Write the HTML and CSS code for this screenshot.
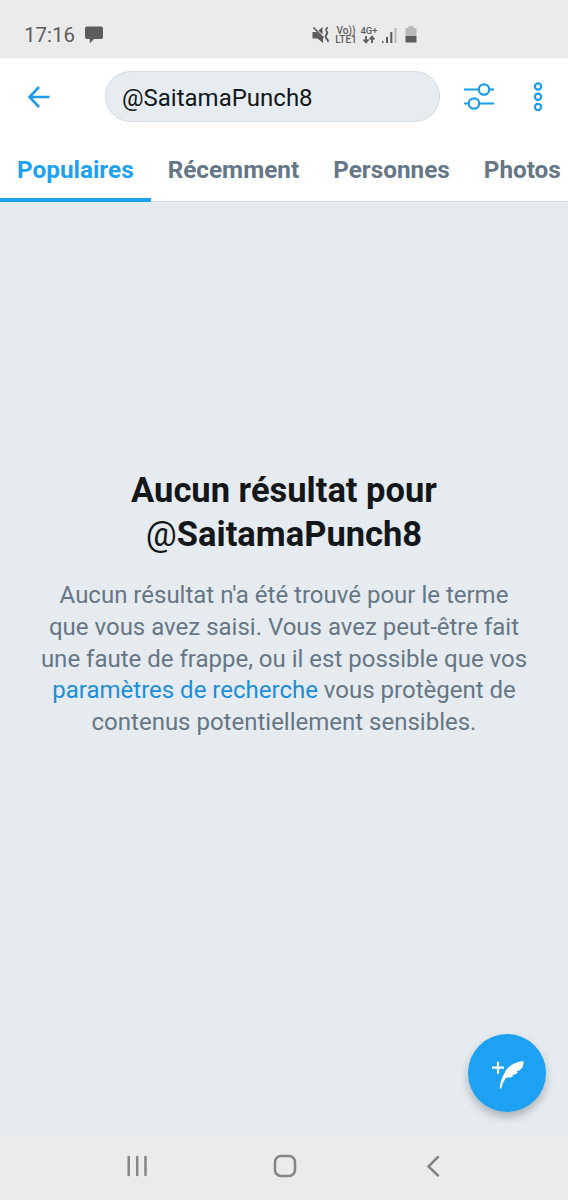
FILE: index.html
```html
<!DOCTYPE html>
<html lang="fr">
<head>
<meta charset="utf-8">
<title>Recherche</title>
<link rel="stylesheet" href="styles.css">
</head>
<body>
<div class="screen">
  <header class="status">
    <span class="clock">17:16</span>
    <svg class="chat" width="18" height="18" viewBox="0 0 18 18"><path d="M2 0.5h14q2 0 2 2v8.500q0 2-2 2h-7l-4.200 4.500V13H2q-2 0-2-2V2.500q0-2 2-2z"/></svg>
    <div class="indicators">
      <svg class="mute" width="18" height="18" viewBox="0 0 18 18"><path d="M0.500 6h4L11 12v5L5.500 12.500H.500z"/><path d="M6.500 4.500L10.500 1v7.500z"/><path class="line" d="M1.500 1.500l10 10.500M16 1.500q-3 1.500-1.500 3.500t0 3.500q-2 2 0 4t1.500 3.500"/></svg>
      <div class="stack volte"><span>Vo))</span><span>LTE1</span></div>
      <div class="stack data"><span>4G+</span><svg width="14" height="9" viewBox="0 0 14 9"><path class="line" d="M4 1v6M1.500 4.500L4 7.300 6.500 4.500M10 8V2M7.500 4.500L10 1.700 12.500 4.500"/></svg></div>
      <svg class="signal" width="15" height="17" viewBox="0 0 15 17"><path d="M0 14h1.500v2H0zM4 10h2v6H4zM8.300 5h2v11h-2z"/><path class="faint" d="M12.500 1h2v15h-2z"/></svg>
      <svg class="battery" width="12" height="18" viewBox="0 0 12 18"><path class="faint" d="M3.500 0h5v2H11.500v8H.500V2h3z"/><path d="M.500 10H11.500v6q0 .5-.5 .5h-10q-.5 0-.5-.5z"/></svg>
    </div>
  </header>
  <div class="toolbar">
    <svg class="back" width="24" height="24" viewBox="0 0 24 24"><path d="M22.500 12H3M12 2L2.500 12l9.500 10"/></svg>
    <div class="search">@SaitamaPunch8</div>
    <svg class="filters" width="30" height="28" viewBox="0 0 30 28"><path d="M0 6.500h14.500M25.500 6.500H30M0 20.500h4.500M15.500 20.500H30"/><circle cx="20" cy="6.500" r="5.200"/><circle cx="10" cy="20.500" r="5.200"/></svg>
    <svg class="more" width="10" height="30" viewBox="0 0 10 30"><circle cx="5" cy="4.500" r="3.100"/><circle cx="5" cy="14.800" r="3.100"/><circle cx="5" cy="25" r="3.100"/></svg>
  </div>
  <nav class="tabs">
    <span class="tab active">Populaires</span><span class="tab">Récemment</span><span class="tab">Personnes</span><span class="tab">Photos</span>
  </nav>
  <main class="empty">
    <h1>Aucun résultat pour<br><span class="at">@</span>SaitamaPunch8</h1>
    <p>Aucun résultat n'a été trouvé pour le terme<br>que vous avez saisi. Vous avez peut-être fait<br>une faute de frappe, ou il est possible que vos<br><a>paramètres de recherche</a> vous protègent de<br>contenus potentiellement sensibles.</p>
    <div class="compose">
      <svg width="34" height="32" viewBox="0 0 34 32"><path class="plus" d="M1 9.700h12M7 3.700v12"/><path class="feather" d="M8.800 30.500C8.700 25.500 11 19.500 13.800 14.500 17 8 24 3.800 32.300 3c.5 2.600 0 4.800-1.300 6.900-1.300 2-3.200 2.900-5.800 3.400l1.600 1c-1.500 2-3.500 2.500-5.800 2.700l1.500.9c-2.300 1.600-4.900 1.700-7.500 1.900-2.300 3-3.700 7-4.800 10.700z"/></svg>
    </div>
  </main>
  <footer class="navbar">
    <svg width="22" height="22" viewBox="0 0 22 22"><path d="M2.700 2v18M11.200 2v18M19.500 2v18"/></svg>
    <svg width="24" height="24" viewBox="0 0 24 24"><rect x="2" y="2" width="20" height="20" rx="6"/></svg>
    <svg class="prev" width="14" height="22" viewBox="0 0 14 22"><path d="M12 2L2.500 11.500l9.500 9"/></svg>
  </footer>
</div>
</body>
</html>
```
FILE: styles.css
```css
* { box-sizing: border-box; }
body { margin: 0; font-family: Roboto, "Liberation Sans", sans-serif; }
svg { display: block; flex: none; overflow: visible; }
.screen { width: 568px; height: 1200px; display: flex; flex-direction: column; overflow: hidden; background: #fff; }

.status { height: 58px; flex: none; display: flex; align-items: center; padding: 12px 0 0 24px; background: #ebebeb; color: #5c5c5c; fill: #5c5c5c; }
.clock { width: 61px; font-size: 20.5px; line-height: 24px; }
.indicators { display: flex; align-items: center; margin-left: 209px; }
.line { fill: none; stroke: #5c5c5c; stroke-width: 1.8; }
.faint { fill: #b9b9b9; }
.stack { display: flex; flex-direction: column; align-items: center; font-size: 10px; line-height: 9px; font-weight: 500; }
.volte { width: 22px; margin-left: 5px; }
.data { width: 18px; margin-left: 3px; font-size: 9.5px; }
.signal { margin-left: 4px; }
.battery { margin-left: 8px; }

.toolbar { height: 77px; flex: none; display: flex; align-items: center; padding-left: 27px; }
.toolbar svg { fill: none; stroke: #1d9cea; stroke-width: 2.2; }
.toolbar .back { stroke-width: 2.6; }
.search { width: 335px; height: 51px; margin-left: 54px; padding-left: 16px; border: 1px solid #d4dce1; border-radius: 26px; background: #e6ecf0; color: #14171a; font-size: 24px; line-height: 52px; }
.filters { margin-left: 24px; }
.more { margin-left: 39px; }

.tabs { height: 67px; flex: none; display: flex; border-bottom: 1px solid #d3dade; }
.tab { height: 67px; flex: none; padding: 0 17px; color: #657786; font-size: 24.300px; line-height: 70px; font-weight: 700; }
.active { color: #1da1f2; border-bottom: 4px solid #1da1f2; }

.empty { position: relative; flex: 1; padding-top: 267px; background: #e6ebef; text-align: center; }
h1 { margin: 0; color: #14171a; font-size: 34.500px; line-height: 43.700px; font-weight: 700; }
.at { font-weight: 400; }
p { margin: 24px 0 0; color: #657786; font-size: 24px; line-height: 31.600px; white-space: nowrap; }
a { color: #1b8edb; }
.compose { position: absolute; right: 22px; bottom: 22px; width: 78px; height: 78px; padding: 24px 0 0 23px; border-radius: 50%; background: #1da1f2; box-shadow: 0 5px 9px rgba(40, 50, 60, .3); }
.plus { stroke: #fff; stroke-width: 2.2; }
.feather { fill: #fff; }

.navbar { height: 66px; flex: none; display: flex; align-items: center; padding: 0 0 2px 126px; background: #ebebeb; }
.navbar svg { fill: none; stroke: #858585; stroke-width: 2.5; stroke-linecap: round; }
.navbar svg + svg { margin-left: 125px; }
.navbar svg.prev { margin-left: 129px; }
```
